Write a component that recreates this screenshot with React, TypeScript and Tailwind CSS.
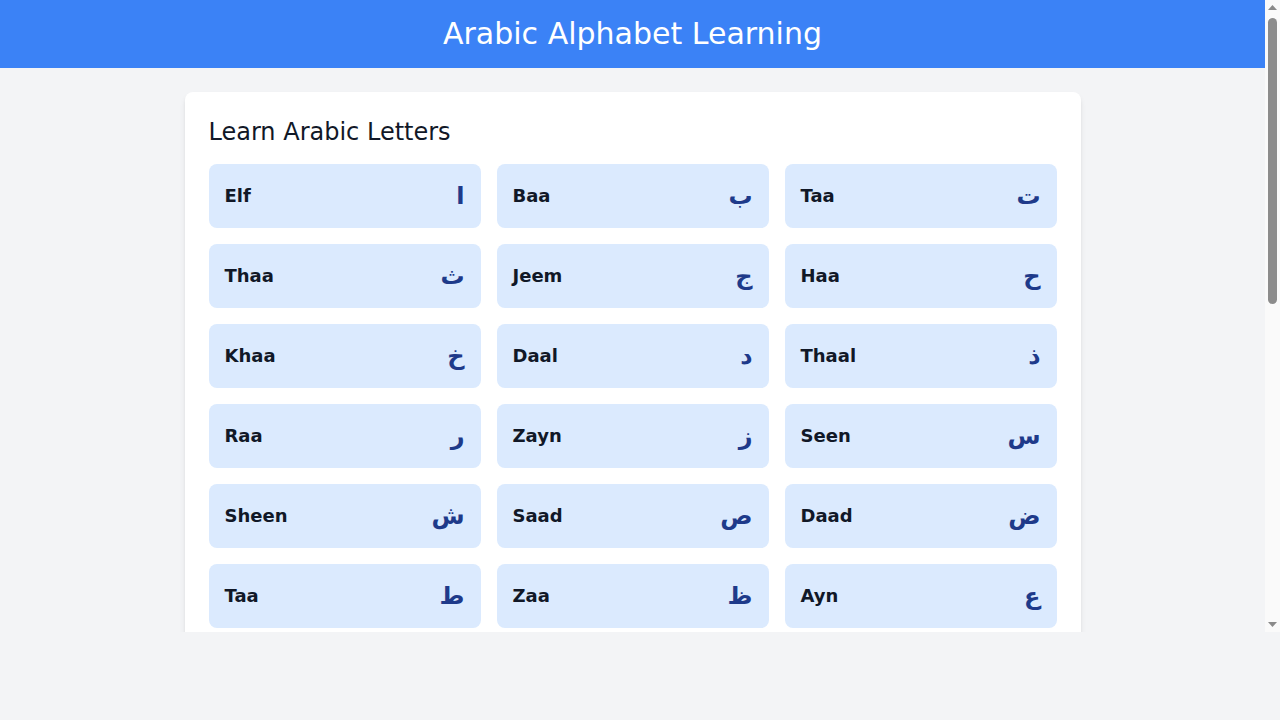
const LETTERS = [
  { name: "Elf", letter: "ا" },
  { name: "Baa", letter: "ب" },
  { name: "Taa", letter: "ت" },
  { name: "Thaa", letter: "ث" },
  { name: "Jeem", letter: "ج" },
  { name: "Haa", letter: "ح" },
  { name: "Khaa", letter: "خ" },
  { name: "Daal", letter: "د" },
  { name: "Thaal", letter: "ذ" },
  { name: "Raa", letter: "ر" },
  { name: "Zayn", letter: "ز" },
  { name: "Seen", letter: "س" },
  { name: "Sheen", letter: "ش" },
  { name: "Saad", letter: "ص" },
  { name: "Daad", letter: "ض" },
  { name: "Taa", letter: "ط" },
  { name: "Zaa", letter: "ظ" },
  { name: "Ayn", letter: "ع" },
  { name: "Ghayn", letter: "غ" },
  { name: "Faa", letter: "ف" },
  { name: "Qaaf", letter: "ق" },
  { name: "Kaaf", letter: "ك" },
  { name: "Laam", letter: "ل" },
  { name: "Meem", letter: "م" },
  { name: "Noon", letter: "ن" },
  { name: "Haa", letter: "ه" },
  { name: "Waw", letter: "و" },
  { name: "Yaa", letter: "ي" }
];

export default function App() {
  return (
    <div className="h-[720px] bg-[#f3f4f6] font-['DejaVu_Sans',sans-serif]">
      <div className="flex h-[632px]">
        <div className="min-w-0 flex-1 overflow-hidden">
          <header className="bg-[#3b82f6] py-4 text-center text-3xl text-white">Arabic Alphabet Learning</header>
          <main className="p-6">
            <div className="mx-auto max-w-4xl rounded-lg bg-white p-6 shadow-md">
              <h2 className="mb-4 text-2xl text-[#111827]">Learn Arabic Letters</h2>
              <div className="grid grid-cols-3 gap-4">
                {LETTERS.map((item, index) => (
                  <LetterCard key={index} name={item.name} letter={item.letter} />
                ))}
              </div>
            </div>
          </main>
        </div>
        <Scrollbar />
      </div>
    </div>
  );
}

function LetterCard({ name, letter }: { name: string; letter: string }) {
  return (
    <div className="flex items-center justify-between rounded-lg bg-[#dbeafe] p-4">
      <span className="text-lg font-bold text-[#111827]">{name}</span>
      <span className="text-2xl font-bold text-[#1e3a8a]">{letter}</span>
    </div>
  );
}

// the page's own scrollbar, drawn since headless hides it
function Scrollbar() {
  return (
    <div className="flex w-[15px] shrink-0 flex-col items-center bg-[#fafafa]">
      <div className="flex h-[15px] items-center justify-center">
        <svg width="9" height="5" viewBox="0 0 9 5">
          <path d="M4.5 0 L9 5 L0 5 Z" fill="#8a8a8a" />
        </svg>
      </div>
      <div className="mt-[3px] h-[286px] w-[9px] rounded-full bg-[#8c8c8c]" />
      <div className="flex-1" />
      <div className="flex h-[15px] items-center justify-center">
        <svg width="9" height="5" viewBox="0 0 9 5">
          <path d="M0 0 L9 0 L4.5 5 Z" fill="#8a8a8a" />
        </svg>
      </div>
    </div>
  );
}
